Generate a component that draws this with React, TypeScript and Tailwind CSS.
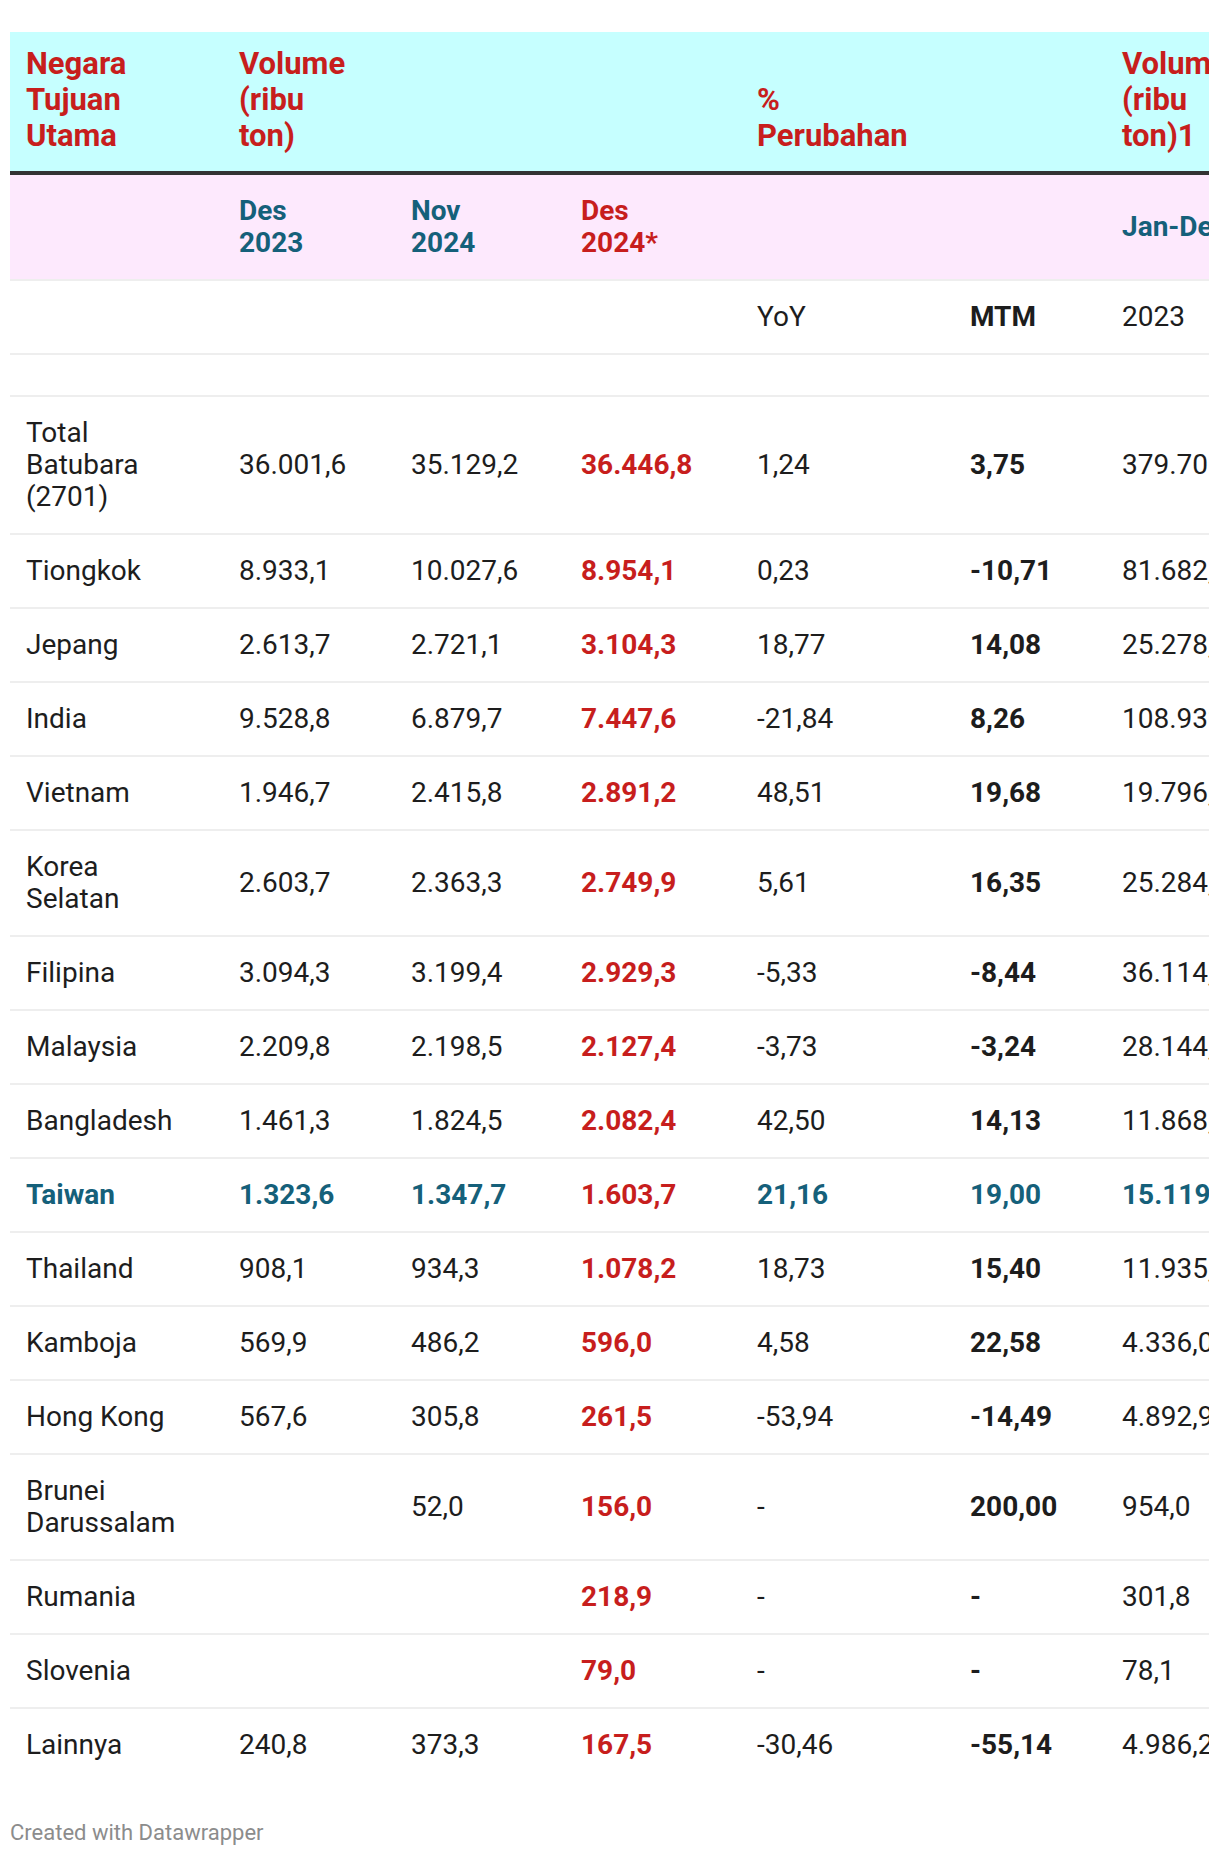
import React from "react";

type Row = {
  name: React.ReactNode;
  a: string;
  b: string;
  d: string;
  yoy: string;
  mtm: string;
  jd: string;
  hl?: boolean;
};

const rows: Row[] = [
  { name: <>Total<br />Batubara<br />(2701)</>, a: "36.001,6", b: "35.129,2", d: "36.446,8", yoy: "1,24", mtm: "3,75", jd: "379.705,0" },
  { name: "Tiongkok", a: "8.933,1", b: "10.027,6", d: "8.954,1", yoy: "0,23", mtm: "-10,71", jd: "81.682,5" },
  { name: "Jepang", a: "2.613,7", b: "2.721,1", d: "3.104,3", yoy: "18,77", mtm: "14,08", jd: "25.278,4" },
  { name: "India", a: "9.528,8", b: "6.879,7", d: "7.447,6", yoy: "-21,84", mtm: "8,26", jd: "108.932,1" },
  { name: "Vietnam", a: "1.946,7", b: "2.415,8", d: "2.891,2", yoy: "48,51", mtm: "19,68", jd: "19.796,3" },
  { name: <>Korea<br />Selatan</>, a: "2.603,7", b: "2.363,3", d: "2.749,9", yoy: "5,61", mtm: "16,35", jd: "25.284,6" },
  { name: "Filipina", a: "3.094,3", b: "3.199,4", d: "2.929,3", yoy: "-5,33", mtm: "-8,44", jd: "36.114,2" },
  { name: "Malaysia", a: "2.209,8", b: "2.198,5", d: "2.127,4", yoy: "-3,73", mtm: "-3,24", jd: "28.144,7" },
  { name: "Bangladesh", a: "1.461,3", b: "1.824,5", d: "2.082,4", yoy: "42,50", mtm: "14,13", jd: "11.868,9" },
  { name: "Taiwan", a: "1.323,6", b: "1.347,7", d: "1.603,7", yoy: "21,16", mtm: "19,00", jd: "15.119,8", hl: true },
  { name: "Thailand", a: "908,1", b: "934,3", d: "1.078,2", yoy: "18,73", mtm: "15,40", jd: "11.935,0" },
  { name: "Kamboja", a: "569,9", b: "486,2", d: "596,0", yoy: "4,58", mtm: "22,58", jd: "4.336,0" },
  { name: "Hong Kong", a: "567,6", b: "305,8", d: "261,5", yoy: "-53,94", mtm: "-14,49", jd: "4.892,9" },
  { name: <>Brunei<br />Darussalam</>, a: "", b: "52,0", d: "156,0", yoy: "-", mtm: "200,00", jd: "954,0" },
  { name: "Rumania", a: "", b: "", d: "218,9", yoy: "-", mtm: "-", jd: "301,8" },
  { name: "Slovenia", a: "", b: "", d: "79,0", yoy: "-", mtm: "-", jd: "78,1" },
  { name: "Lainnya", a: "240,8", b: "373,3", d: "167,5", yoy: "-30,46", mtm: "-55,14", jd: "4.986,2" },
];

const grid =
  "grid grid-cols-[213px_172px_170px_176px_213px_152px_180px] w-[1276px]";

export default function App() {
  return (
    <div className="bg-white min-h-[1856px] pt-[32px] font-['Roboto',sans-serif] text-[#1d1d1d]">
      <div className="ml-[10px] w-[1199px] overflow-hidden">
        {/* Header row */}
        <div
          className={`${grid} items-end bg-[#c6ffff] border-b-4 border-[#333333] text-[31px] leading-[36px] font-bold text-[#c71e1d]`}
        >
          <div className="px-4 pt-[14px] pb-[17px]">Negara<br />Tujuan<br />Utama</div>
          <div className="px-4 pt-[14px] pb-[17px]">Volume<br />(ribu<br />ton)</div>
          <div className="px-4 pb-[17px]"></div>
          <div className="px-4 pb-[17px]"></div>
          <div className="px-4 pb-[17px]">%<br />Perubahan</div>
          <div className="px-4 pb-[17px]"></div>
          <div className="px-4 pb-[17px] whitespace-nowrap">Volume<br />(ribu<br />ton)1</div>
        </div>

        {/* Sub header */}
        <div
          className={`${grid} items-center bg-[#fde9fd] border-b-2 border-[#eeeeee] text-[28px] leading-[32px] font-bold`}
        >
          <div className="px-4 py-[20px]"></div>
          <div className="px-4 py-[20px] text-[#15607a]">Des<br />2023</div>
          <div className="px-4 py-[20px] text-[#15607a]">Nov<br />2024</div>
          <div className="px-4 py-[20px] text-[#c71e1d]">Des<br />2024*</div>
          <div className="px-4 py-[20px]"></div>
          <div className="px-4 py-[20px]"></div>
          <div className="px-4 py-[20px] text-[#15607a] whitespace-nowrap">Jan-Des</div>
        </div>

        {/* YoY / MTM row */}
        <div className={`${grid} items-center border-b-2 border-[#eeeeee] text-[28px] leading-[32px]`}>
          <div className="px-4 py-[20px]"></div>
          <div className="px-4 py-[20px]"></div>
          <div className="px-4 py-[20px]"></div>
          <div className="px-4 py-[20px]"></div>
          <div className="px-4 py-[20px]">YoY</div>
          <div className="px-4 py-[20px] font-bold">MTM</div>
          <div className="px-4 py-[20px]">2023</div>
        </div>

        {/* empty row */}
        <div className={`${grid} border-b-2 border-[#eeeeee] h-[42px]`}></div>

        {rows.map((r, i) => {
          const last = i === rows.length - 1;
          const base = r.hl ? "font-bold text-[#15607a]" : "";
          return (
            <div
              key={i}
              className={`${grid} items-center text-[28px] leading-[32px] ${last ? "" : "border-b-2 border-[#eeeeee]"}`}
            >
              <div className={`px-4 py-[20px] ${base}`}>{r.name}</div>
              <div className={`px-4 py-[20px] ${base}`}>{r.a}</div>
              <div className={`px-4 py-[20px] ${base}`}>{r.b}</div>
              <div className="px-4 py-[20px] font-bold text-[#c71e1d]">{r.d}</div>
              <div className={`px-4 py-[20px] ${base}`}>{r.yoy}</div>
              <div className={`px-4 py-[20px] font-bold ${r.hl ? "text-[#15607a]" : ""}`}>{r.mtm}</div>
              <div className={`px-4 py-[20px] whitespace-nowrap ${base}`}>{r.jd}</div>
            </div>
          );
        })}
      </div>
      <div className="ml-[10px] mt-[39px] text-[22px] leading-[26px] text-[#8c8c8c]">
        Created with Datawrapper
      </div>
    </div>
  );
}
